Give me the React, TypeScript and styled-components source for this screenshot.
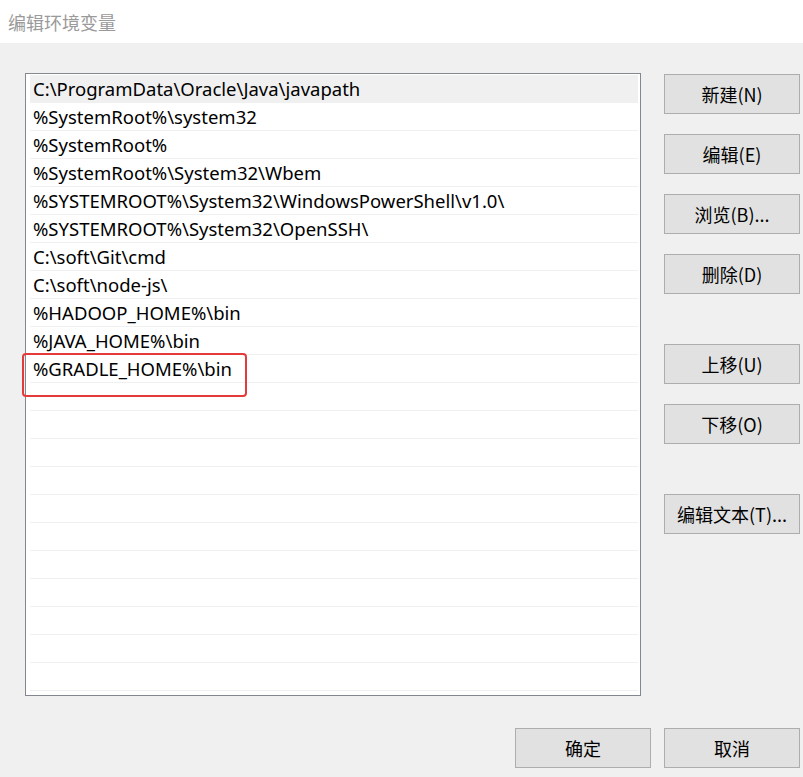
import React from "react";
import styled, { createGlobalStyle } from "styled-components";

const GlobalStyle = createGlobalStyle`
  html, body {
    margin: 0;
    padding: 0;
    background: #f0f0f0;
  }
  body {
    font-family: "Noto Sans", "Noto Sans CJK SC", sans-serif;
  }
`;

const Window = styled.div`
  width: 803px;
  height: 777px;
  background: #f0f0f0;
  display: flex;
  flex-direction: column;
  overflow: hidden;
`;

const TitleBar = styled.div`
  height: 43px;
  background: #ffffff;
  display: flex;
  align-items: center;
  padding-left: 8px;
  box-sizing: border-box;
  color: #9a9a9a;
  font-family: "Noto Sans CJK SC", sans-serif;
  font-size: 18px;
`;

const Body = styled.div`
  display: flex;
  padding: 30px 0 0 25px;
  gap: 23px;
`;

const ListBox = styled.div`
  position: relative;
  width: 616px;
  height: 623px;
  box-sizing: border-box;
  border: 1px solid #828790;
  background: #ffffff;
  padding: 1px 2px 0 4px;
`;

const Row = styled.div<{ $selected?: boolean }>`
  height: 28px;
  box-sizing: border-box;
  border-bottom: 1px solid #f0f0f0;
  background: ${(p) => (p.$selected ? "#f0f0f0" : "transparent")};
  padding-left: 3px;
  display: flex;
  align-items: center;
  font-family: "Noto Sans", sans-serif;
  font-size: 18.5px;
  color: #000;
  white-space: nowrap;
`;

const Highlight = styled.div`
  position: absolute;
  left: -4px;
  top: 279px;
  width: 225px;
  height: 44px;
  box-sizing: border-box;
  border: 2px solid #e53a3a;
  border-radius: 4px;
`;

const SideColumn = styled.div`
  display: flex;
  flex-direction: column;
  width: 136px;
  padding-top: 1px;
`;

const Button = styled.button<{ $gap?: number }>`
  width: 136px;
  height: 40px;
  box-sizing: border-box;
  margin-bottom: ${(p) => p.$gap ?? 20}px;
  border: 1px solid #adadad;
  background: #e1e1e1;
  font-family: "Noto Sans CJK SC", sans-serif;
  font-size: 18px;
  color: #000;
  padding: 0;
  display: flex;
  align-items: center;
  justify-content: center;
`;

const Footer = styled.div`
  display: flex;
  justify-content: flex-end;
  gap: 13px;
  padding: 32px 3px 0 0;
`;

const paths = [
  "C:\\ProgramData\\Oracle\\Java\\javapath",
  "%SystemRoot%\\system32",
  "%SystemRoot%",
  "%SystemRoot%\\System32\\Wbem",
  "%SYSTEMROOT%\\System32\\WindowsPowerShell\\v1.0\\",
  "%SYSTEMROOT%\\System32\\OpenSSH\\",
  "C:\\soft\\Git\\cmd",
  "C:\\soft\\node-js\\",
  "%HADOOP_HOME%\\bin",
  "%JAVA_HOME%\\bin",
  "%GRADLE_HOME%\\bin",
];

const rows = [...paths, ...Array(22 - paths.length).fill("")];

export default function App() {
  return (
    <>
      <GlobalStyle />
      <Window>
        <TitleBar>编辑环境变量</TitleBar>
        <Body>
          <ListBox>
            {rows.map((p, i) => (
              <Row key={i} $selected={i === 0}>
                {p}
              </Row>
            ))}
            <Highlight />
          </ListBox>
          <SideColumn>
            <Button>新建(N)</Button>
            <Button>编辑(E)</Button>
            <Button>浏览(B)...</Button>
            <Button $gap={50}>删除(D)</Button>
            <Button>上移(U)</Button>
            <Button $gap={50}>下移(O)</Button>
            <Button>编辑文本(T)...</Button>
          </SideColumn>
        </Body>
        <Footer>
          <Button $gap={0}>确定</Button>
          <Button $gap={0}>取消</Button>
        </Footer>
      </Window>
    </>
  );
}
